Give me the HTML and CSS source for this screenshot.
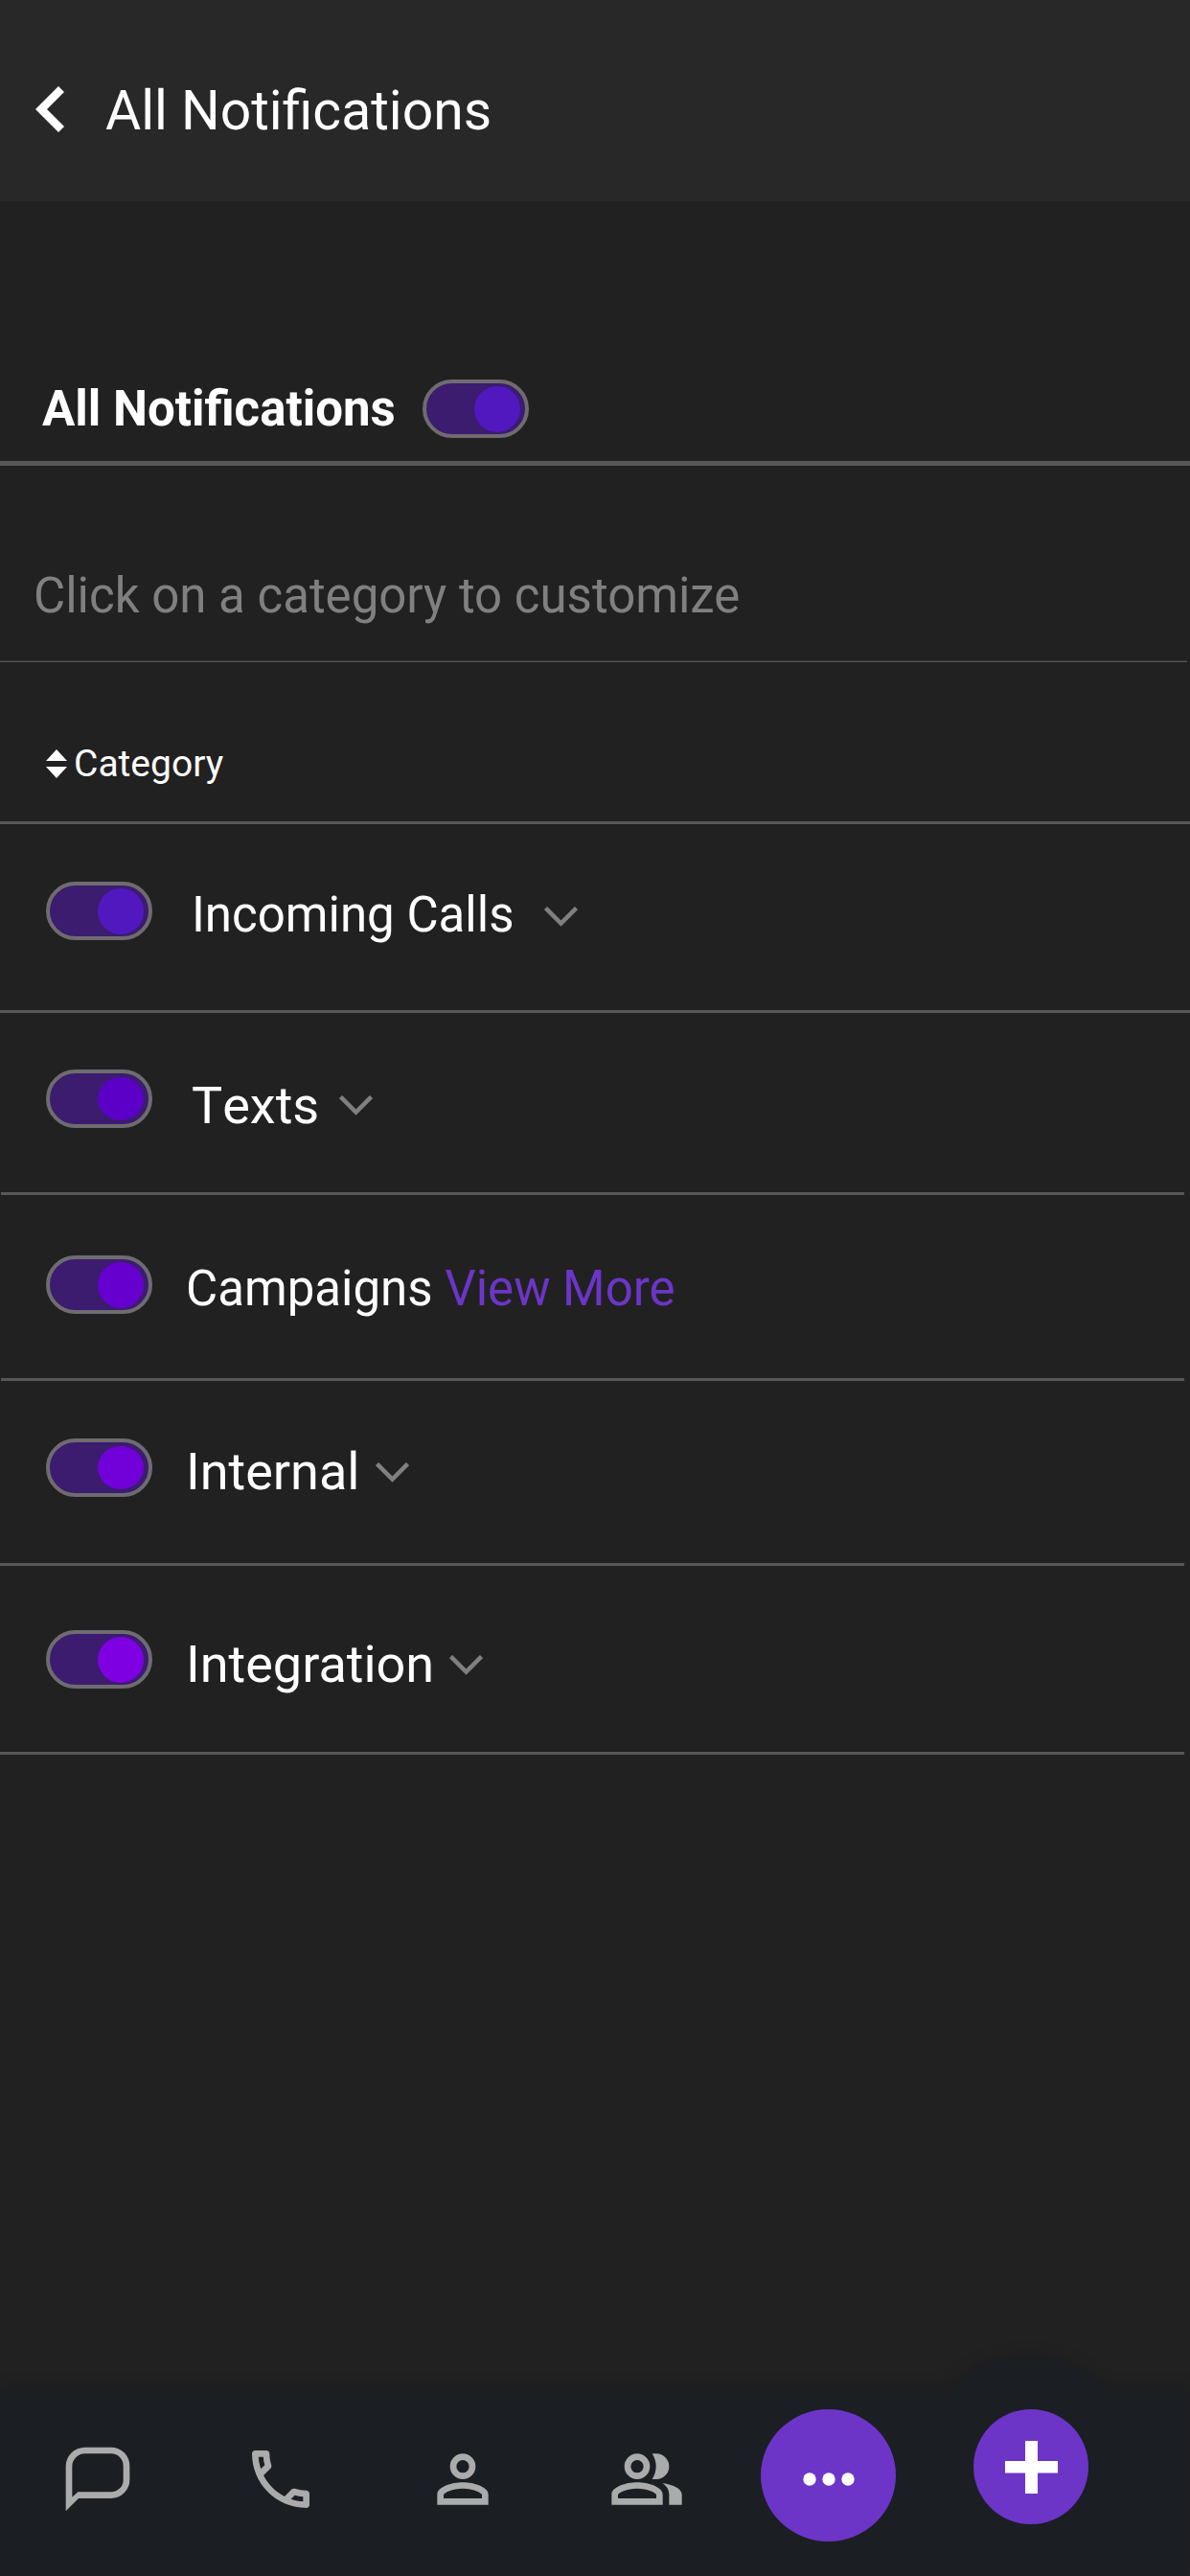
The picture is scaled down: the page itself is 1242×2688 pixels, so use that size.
FILE: index.html
```html
<!DOCTYPE html>
<html lang="en">
<head>
  <meta charset="UTF-8" />
  <title>All Notifications</title>
  <link rel="stylesheet" href="styles.css">
</head>
<body>

<div class="page">
  <header class="header">
    <svg class="back" viewBox="0 0 30 48"><path d="M24 0l6 6-18 18 18 18-6 6L0 24z" fill="#fff"/></svg>
    <h1 class="title">All Notifications</h1>
  </header>

  <main>
    <section class="all-section">
      <h2 class="all-label">All Notifications</h2>
      <span class="toggle"><span class="knob"></span></span>
    </section>

    <p class="hint">Click on a category to customize</p>

    <div class="category-head">
      <svg class="sort" viewBox="0 0 22 30"><path d="M11 0l11 12H0zM0 18h22L11 30z" fill="#fff"/></svg>
      <span>Category</span>
    </div>

    <div class="row row-calls">
      <span class="toggle"><span class="knob"></span></span>
      <span class="label">Incoming Calls</span>
      <svg class="arrow" viewBox="0 0 35 21"><path d="M1.500 1.500l16 16 16-16" /></svg>
    </div>

    <div class="row row-texts">
      <span class="toggle"><span class="knob"></span></span>
      <span class="label">Texts</span>
      <svg class="arrow" viewBox="0 0 35 21"><path d="M1.500 1.500l16 16 16-16" /></svg>
    </div>

    <div class="row row-campaigns">
      <span class="toggle"><span class="knob"></span></span>
      <span class="label">Campaigns <a class="more">View More</a></span>
    </div>

    <div class="row row-internal">
      <span class="toggle"><span class="knob"></span></span>
      <span class="label">Internal</span>
      <svg class="arrow" viewBox="0 0 35 21"><path d="M1.500 1.500l16 16 16-16" /></svg>
    </div>

    <div class="row row-integration">
      <span class="toggle"><span class="knob"></span></span>
      <span class="label">Integration</span>
      <svg class="arrow" viewBox="0 0 35 21"><path d="M1.500 1.500l16 16 16-16" /></svg>
    </div>
  </main>

  <nav class="nav">
    <svg class="nav-bg" viewBox="0 0 1239 228"><path d="M0 34H991A116 116 0 0 1 1153 34H1239V228H0z" /></svg>

    <svg class="icon chat" viewBox="0 0 24 24"><path d="M8 2h8.200A5.800 5.800 0 0 1 22 7.800v4.400A5.800 5.800 0 0 1 16.200 18H6l-4 4V8a6 6 0 0 1 6-6zm0 2a4 4 0 0 0-4 4v9.600L5.800 16h10.400a3.800 3.800 0 0 0 3.800-3.800V7.800A3.800 3.800 0 0 0 16.200 4z"/></svg>
    <svg class="icon phone" viewBox="0 0 24 24"><path d="M6.54 5c.06.89.21 1.76.45 2.59l-1.2 1.2c-.41-1.2-.67-2.47-.76-3.79h1.51m9.86 12.02c.85.24 1.72.39 2.6.45v1.49c-1.32-.09-2.59-.35-3.8-.75l1.2-1.19M7.5 3H4c-.55 0-1 .45-1 1 0 9.39 7.61 17 17 17 .55 0 1-.45 1-1v-3.49c0-.55-.45-1-1-1-1.24 0-2.45-.2-3.57-.57-.1-.04-.21-.05-.31-.05-.26 0-.51.1-.71.29l-2.2 2.2c-2.83-1.45-5.15-3.76-6.59-6.59l2.2-2.2c.28-.28.36-.67.25-1.02C8.7 6.45 8.5 5.25 8.5 4c0-.55-.45-1-1-1z"/></svg>
    <svg class="icon person" viewBox="0 0 24 24"><path fill-rule="evenodd" d="M12 4a4 4 0 1 1 0 8 4 4 0 0 1 0-8zm0 2a2 2 0 1 0 0 4 2 2 0 0 0 0-4zM4 20v-3.200C4 14.400 8.600 13 12 13s8 1.400 8 3.800V20zm2-2h12v-1.100c0-.7-2.900-2-6-2s-6 1.300-6 2z"/></svg>
    <svg class="icon people" viewBox="0 0 24 24"><path fill-rule="evenodd" d="M9 4a4 4 0 1 1 0 8 4 4 0 0 1 0-8zm0 2a2 2 0 1 0 0 4 2 2 0 0 0 0-4zM1 20v-3.200C1 14.400 5.600 13 9 13s8 1.400 8 3.800V20zm2-2h12v-1.100c0-.7-2.900-2-6-2s-6 1.300-6 2zM13.700 12c1.600-2.500 1.600-5.500 0-8H15a4 4 0 0 1 0 8zM16.900 13.200c3.200.5 6.100 1.700 6.100 3.600V20h-4v-3.200c0-1.500-.8-2.700-2.100-3.600z"/></svg>

    <span class="dots">
      <svg viewBox="0 0 54 14"><circle cx="7" cy="7" r="6.700"/><circle cx="27" cy="7" r="6.700"/><circle cx="47" cy="7" r="6.700"/></svg>
    </span>
    <span class="plus">
      <svg viewBox="0 0 55 55"><path d="M21 0h13v21h21v12.500H34V55H21V33.500H0V21h21z"/></svg>
    </span>
  </nav>
</div>

</body>
</html>
```

FILE: styles.css
```css
* {
  box-sizing: border-box;
}
body {
  margin: 0;
  background: #212121;
  color: #fff;
  font-family: Roboto, "Liberation Sans", sans-serif;
}
.page {
  width: 1242px;
  height: 2688px;
  display: flex;
  flex-direction: column;
  overflow: hidden;
}

/* header */
.header {
  display: flex;
  align-items: flex-start;
  height: 210px;
  padding: 86px 0 0 37px;
  background: #282828;
}
.back {
  width: 30px;
  height: 48px;
  margin-top: 4px;
}
.title {
  margin: 0 0 0 43px;
  font-size: 57px;
  line-height: 60px;
  font-weight: 400;
}

/* toggle */
.toggle {
  flex: none;
  display: flex;
  justify-content: flex-end;
  align-items: center;
  width: 111px;
  height: 61px;
  padding-right: 5px;
  border: 4px solid #6e6c70;
  border-radius: 31px;
  background: #3b1c6e;
}
.knob {
  width: 48px;
  height: 48px;
  border-radius: 50%;
  background: #5218c0;
}

.all-section {
  display: flex;
  align-items: flex-start;
  height: 276px;
  padding: 186px 0 0 44px;
  border-bottom: 5px solid #575757;
}
.all-label {
  width: 397px;
  margin: 1px 0 0;
  font-size: 51px;
  line-height: 60px;
  font-weight: 700;
  white-space: nowrap;
}
.hint {
  height: 205px;
  margin: 0 3px 0 0;
  padding: 106px 0 0 35px;
  border-bottom: 1px solid #575757;
  box-shadow: inset 0 -1px #333;
  color: #808080;
  font-size: 51px;
  line-height: 60px;
}
.category-head {
  display: flex;
  align-items: flex-start;
  height: 169px;
  padding: 76px 0 0 48px;
  border-bottom: 3px solid #575757;
  font-size: 39px;
  line-height: 60px;
}
.sort {
  width: 22px;
  height: 30px;
  margin: 15px 7px 0 0;
}

/* category rows */
.row {
  display: flex;
  align-items: flex-start;
  margin-right: 6px;
  padding-left: 48px;
  border-bottom: 3px solid #575757;
}
.label {
  margin: 5px 0 0 38px;
  font-size: 51px;
  line-height: 60px;
  white-space: nowrap;
}
.arrow {
  width: 35px;
  height: 21px;
  fill: none;
  stroke: #808080;
  stroke-width: 4.5;
}
.more {
  color: #6c35c8;
}
.row-calls {
  height: 197px;
  margin-right: 0;
  padding-top: 60px;
}
.row-calls .label {
  margin-left: 41px;
}
.row-calls .arrow {
  margin: 26px 0 0 32px;
}
.row-texts {
  height: 190px;
  margin-left: 1px;
  padding-top: 59px;
  padding-left: 47px;
}
.row-texts .label {
  margin: 8px 0 0 41px;
  font-size: 54px;
  font-kerning: none;
}
.row-texts .arrow {
  margin: 27px 0 0 21px;
}
.row-texts .knob {
  height: 45px;
  background: #5c00c7;
}
.row-campaigns {
  height: 194px;
  margin-left: 1px;
  padding-top: 63px;
  padding-left: 47px;
}
.row-campaigns .label {
  margin-left: 35px;
}
.row-campaigns .knob {
  background: #6600cf;
}
.row-internal {
  height: 193px;
  padding-top: 60px;
}
.row-internal .label,
.row-integration .label {
  margin: 5px 0 0 35px;
  font-size: 54px;
}
.row-internal .arrow {
  margin: 25px 0 0 17px;
}
.row-internal .knob {
  height: 45px;
  background: #7200d9;
}
.row-integration {
  height: 197px;
  padding-top: 67px;
}
.row-integration .label {
  margin-top: 6px;
}
.row-integration .arrow {
  margin: 26px 0 0 16px;
}
.row-integration .knob {
  background: #7e00e2;
}

/* bottom bar */
.nav {
  position: relative;
  display: flex;
  align-items: flex-start;
  height: 194px;
  margin: auto 3px 1px 0;
}
.nav-bg {
  position: absolute;
  left: 0;
  top: -34px;
  width: 1239px;
  height: 228px;
  fill: #1b1e23;
  overflow: visible;
  filter: drop-shadow(0 0 9px rgba(0, 0, 0, 0.2));
}
.icon {
  position: relative;
  flex: none;
  width: 80px;
  height: 80px;
  margin-top: 54px;
  fill: #ababab;
}
.chat {
  margin-left: 62px;
}
.phone {
  margin-left: 111px;
}
.person {
  margin-left: 110px;
}
.people {
  margin-left: 112px;
}
.dots,
.plus {
  position: relative;
  flex: none;
  display: flex;
  justify-content: center;
  align-items: center;
  margin-top: 21px;
  border-radius: 50%;
  background: #6c35c8;
}
.dots {
  width: 141px;
  height: 138px;
  margin-left: 79px;
  padding-top: 7px;
}
.dots svg {
  width: 54px;
  height: 14px;
  fill: #fff;
}
.plus {
  width: 120px;
  height: 120px;
  margin-left: 81px;
}
.plus svg {
  width: 55px;
  height: 55px;
  fill: #fff;
}
```
